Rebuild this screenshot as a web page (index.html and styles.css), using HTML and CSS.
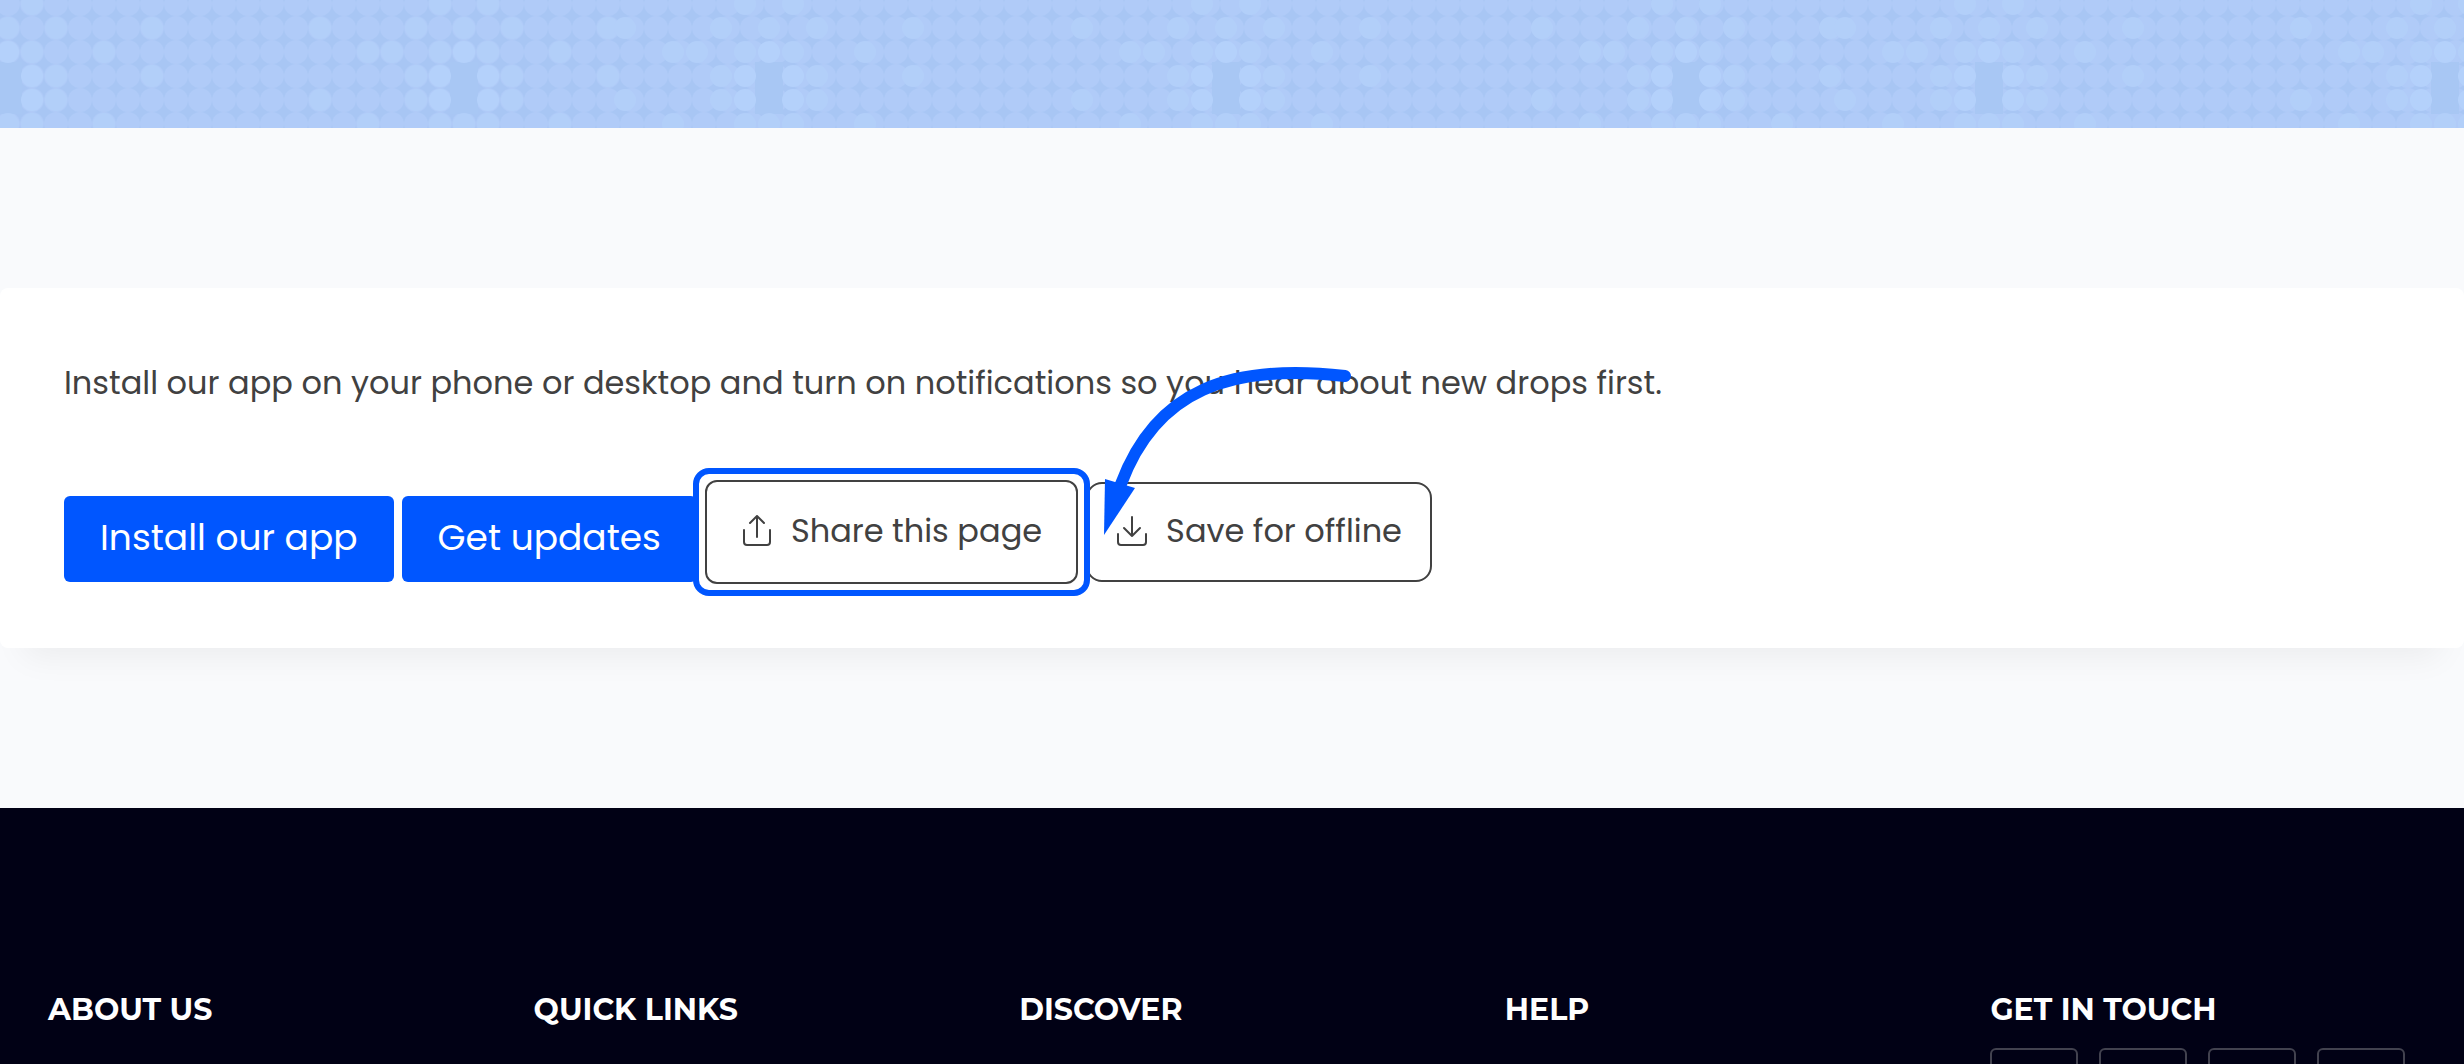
FILE: index.html
```html
<!DOCTYPE html>
<html lang="en">
<head>
    <meta charset="UTF-8">
    <meta name="viewport" content="width=device-width, initial-scale=1.0">
    <title>Install our app</title>
    <link rel="stylesheet" href="styles.css">
</head>
<body>
    <div class="hero">
        <svg class="hero-dots" viewBox="0 0 2464 128" preserveAspectRatio="xMidYMid slice" aria-hidden="true">
            <defs>
                <pattern id="dots" x="20" y="64" width="24" height="24" patternUnits="userSpaceOnUse">
                    <circle cx="12" cy="12" r="12" fill="#b0cbf8"/>
                </pattern>
                <g id="cluster">
                    <rect x="-14" y="62" width="28" height="52" fill="#a8c7f4"/>
                    <g fill="#b4d1fb">
                        <circle cx="-24" cy="76" r="11"/>
                        <circle cx="24" cy="76" r="11"/>
                        <circle cx="-24" cy="100" r="11"/>
                        <circle cx="24" cy="100" r="11"/>
                        <circle cx="0" cy="52" r="11"/>
                    </g>
                    <g fill="#b2cff9">
                        <circle cx="-48" cy="76" r="11"/>
                        <circle cx="48" cy="76" r="11"/>
                        <circle cx="-48" cy="100" r="11"/>
                        <circle cx="48" cy="100" r="11"/>
                        <circle cx="-24" cy="52" r="11"/>
                        <circle cx="24" cy="52" r="11"/>
                        <circle cx="0" cy="28" r="11"/>
                        <circle cx="-48" cy="28" r="11"/>
                        <circle cx="48" cy="28" r="11"/>
                        <circle cx="0" cy="124" r="11"/>
                        <circle cx="-24" cy="124" r="11"/>
                        <circle cx="24" cy="124" r="11"/>
                        <circle cx="-24" cy="4" r="11"/>
                        <circle cx="24" cy="4" r="11"/>
                        <circle cx="-72" cy="52" r="11"/>
                        <circle cx="-96" cy="52" r="11"/>
                        <circle cx="96" cy="52" r="11"/>
                        <circle cx="-96" cy="124" r="11"/>
                        <circle cx="96" cy="124" r="11"/>
                        <circle cx="-144" cy="28" r="11"/>
                        <circle cx="144" cy="28" r="11"/>
                        <circle cx="-144" cy="100" r="11"/>
                        <circle cx="144" cy="76" r="11"/>
                    </g>
                </g>
            </defs>
            <rect width="2464" height="128" fill="#a8c6f4"/>
            <rect width="2464" height="128" fill="url(#dots)"/>
            <use href="#cluster" x="8"/>
            <use href="#cluster" x="464"/>
            <use href="#cluster" x="769"/>
            <use href="#cluster" x="1226"/>
            <use href="#cluster" x="1686"/>
            <use href="#cluster" x="1989"/>
            <use href="#cluster" x="2445"/>
        </svg>
    </div>

    <main class="content">
        <section class="card">
            <p class="intro">Install our app on your phone or desktop and turn on notifications so you hear about new drops first.</p>
            <div class="actions">
                <button class="btn btn-primary" type="button">Install our app</button>
                <button class="btn btn-primary" type="button">Get updates</button>
                <button class="btn btn-outline btn-active" type="button">
                    <svg class="icon" viewBox="0 0 32 32" aria-hidden="true">
                        <path d="M16 22V1M9 8l7-7 7 7M3 15v12a3 3 0 0 0 3 3h20a3 3 0 0 0 3-3V15"/>
                    </svg>
                    Share this page
                </button>
                <button class="btn btn-outline" type="button">
                    <svg class="icon" viewBox="0 0 32 32" aria-hidden="true">
                        <path d="M16 2v19M8 13l8 8 8-8M2 19v8a3 3 0 0 0 3 3h22a3 3 0 0 0 3-3v-8"/>
                    </svg>
                    Save for offline
                </button>
            </div>
            <svg class="arrow" viewBox="0 0 250 172" aria-hidden="true">
                <path class="arrow-line" d="M243 10C128 -3 54 24 19 118"/>
                <path class="arrow-head" d="M3 113l30 9L2 169z"/>
            </svg>
        </section>
    </main>

    <footer class="footer">
        <h3>ABOUT US</h3>
        <h3>QUICK LINKS</h3>
        <h3>DISCOVER</h3>
        <h3>HELP</h3>
        <div>
            <h3>GET IN TOUCH</h3>
            <div class="social">
                <a href="#" aria-label="Facebook"></a>
                <a href="#" aria-label="Instagram"></a>
                <a href="#" aria-label="YouTube"></a>
                <a href="#" aria-label="LinkedIn"></a>
            </div>
        </div>
    </footer>
</body>
</html>
```
FILE: styles.css
```css
* {
    box-sizing: border-box;
}
body {
    margin: 0;
    height: 100vh;
    overflow: hidden;
    background-color: #f9fafc;
    color: #414141;
    font-family: Poppins, Inter, sans-serif;
    font-size: 32px;
}
.hero {
    height: 128px;
    background-color: #abc8f5;
}
.hero-dots {
    display: block;
    width: 100%;
    height: 100%;
}
.content {
    padding: 160px 0;
}
.card {
    position: relative;
    padding: 64px 64px 66px;
    background: #ffffff;
    border-radius: 8px;
    box-shadow: 0 32px 32px -24px rgba(0, 0, 0, 0.06);
}
.intro {
    margin: 0 0 68px;
    line-height: 62px;
}
.actions {
    display: flex;
    align-items: flex-end;
    gap: 8px;
}
.btn {
    display: flex;
    align-items: center;
    justify-content: center;
    font-family: inherit;
    white-space: nowrap;
    cursor: pointer;
}
.btn-primary {
    height: 86px;
    padding: 0 36px 4px;
    border: none;
    border-radius: 6px;
    background-color: #0056ff;
    color: #ffffff;
    font-size: 36px;
}
.btn-outline {
    height: 100px;
    gap: 18px;
    padding: 0 28px 2px;
    border: 2px solid #414141;
    border-radius: 16px;
    background-color: #ffffff;
    color: #414141;
    font-size: 32px;
}
.btn-active {
    position: relative;
    isolation: isolate;
    height: 104px;
    margin: -2px 0;
    padding: 0 34px 2px;
    border-radius: 12px;
}
/* ring around the active button */
.btn-active::before {
    content: "";
    position: absolute;
    inset: -14px;
    z-index: -1;
    border: 6px solid #0056ff;
    border-radius: 16px;
    box-shadow: inset 0 0 0 6px #ffffff;
}
.icon {
    width: 32px;
    height: 32px;
    fill: none;
    stroke: currentColor;
    stroke-width: 2;
    stroke-linecap: round;
    stroke-linejoin: round;
}
.arrow {
    position: absolute;
    top: 78px;
    left: 1102px;
    width: 250px;
    height: 172px;
    pointer-events: none;
}
.arrow-line {
    fill: none;
    stroke: #0056ff;
    stroke-width: 12;
    stroke-linecap: round;
}
.arrow-head {
    fill: #0056ff;
}
.footer {
    display: grid;
    grid-template-columns: repeat(5, 1fr);
    gap: 60px;
    padding: 182px 48px 120px;
    background-color: #010115;
    color: #ffffff;
}
.footer h3 {
    margin: 0;
    font-family: Montserrat, Inter, sans-serif;
    font-size: 30px;
    font-weight: 700;
    line-height: 40px;
}
.social {
    display: flex;
    gap: 21px;
    margin-top: 18px;
}
.social a {
    width: 88px;
    height: 88px;
    border: 2px solid #42424f;
    border-radius: 6px;
}
```
